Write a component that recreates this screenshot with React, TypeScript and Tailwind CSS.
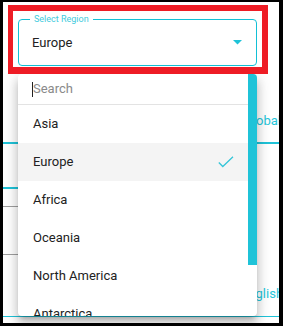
const REGIONS = ['Asia', 'Europe', 'Africa', 'Oceania', 'North America', 'Antarctica']

function SelectField() {
  return (
    <div className="relative ml-[15px] mt-[17px] flex h-[47px] w-[239px] shrink-0 items-center justify-between rounded-[4px] border border-[#12c0d6] pl-[13px] pr-[14px]">
      <span className="absolute left-[11px] top-[-6px] bg-white px-[4px] text-[9px] leading-[10px] text-[#3fcbdd]">
        Select Region
      </span>
      <span className="text-[13px] text-[#222]">Europe</span>
      <svg width="9" height="5" viewBox="0 0 9 5">
        <polygon points="0,0 9,0 4.5,4.5" fill="#1fc3d8" />
      </svg>
    </div>
  )
}

function RegionMenu({ selected }: { selected: string }) {
  return (
    <div className="absolute left-[15px] top-[72px] flex h-[242px] w-[239px] overflow-hidden rounded-[4px] bg-white shadow-[0_5px_5px_-3px_rgba(0,0,0,0.2),0_8px_10px_1px_rgba(0,0,0,0.14),0_3px_14px_2px_rgba(0,0,0,0.12)]">
      <div className="flex w-[230px] flex-col">
        {/* search */}
        <div className="flex h-[31px] shrink-0 items-center border-b border-[#e3e3e3] pl-[14px]">
          <span className="h-[15px] w-px bg-[#222]" />
          <span className="text-[13px] text-[#8a8a8a]">Search</span>
        </div>
        {REGIONS.map(r => (
          <div
            key={r}
            className={`flex h-[38px] shrink-0 items-center justify-between pl-[15px] pr-[14px] text-[13px] text-[#222] ${r === selected ? 'bg-[#f4f4f4]' : ''}`}
          >
            <span>{r}</span>
            {r === selected && (
              <svg width="16" height="12" viewBox="0 0 16 12" fill="none">
                <polyline points="0.8,6.5 4.8,10.5 15,0.8" stroke="#34c5d8" strokeWidth="1.3" />
              </svg>
            )}
          </div>
        ))}
      </div>
      {/* scrollbar */}
      <div className="w-[9px]">
        <div className="h-[191px] w-full bg-[#1fc3d8]" />
      </div>
    </div>
  )
}

export default function App() {
  return (
    <div className="h-[326px] w-[283px] bg-black pl-[3px] pt-[2px]" style={{ fontFamily: 'Roboto, "Noto Sans", sans-serif' }}>
      <div className="relative flex h-[321px] w-[276px] flex-col overflow-hidden bg-white">
        <SelectField />

        {/* page underneath */}
        <div className="mt-[47px] h-[16px] shrink-0 whitespace-nowrap pl-[241px] text-[13px] leading-[16px] text-[#26c6da]">
          Global
        </div>
        <div className="mt-[13px] h-[2px] w-full shrink-0 bg-[#1fc3d8]" />
        <div className="mt-[43px] h-[2px] w-[110px] shrink-0 bg-[#1fc3d8]" />
        <div className="mt-[17px] h-px w-[200px] shrink-0 bg-[#9e9e9e]" />
        <div className="mt-[47px] h-px w-[200px] shrink-0 bg-[#9e9e9e]" />
        <div className="mt-[31px] h-[16px] shrink-0 whitespace-nowrap pl-[238px] text-[13px] leading-[16px] text-[#26c6da]">
          English
        </div>
        <div className="mt-[14px] h-px w-full shrink-0 bg-[#1fc3d8]" />

        <RegionMenu selected="Europe" />

        {/* red highlight */}
        <div className="pointer-events-none absolute left-[5px] top-[3px] h-[69px] w-[260px] border-[6px] border-b-[7px] border-l-[5px] border-[#ee1c25]" />
      </div>
    </div>
  )
}
